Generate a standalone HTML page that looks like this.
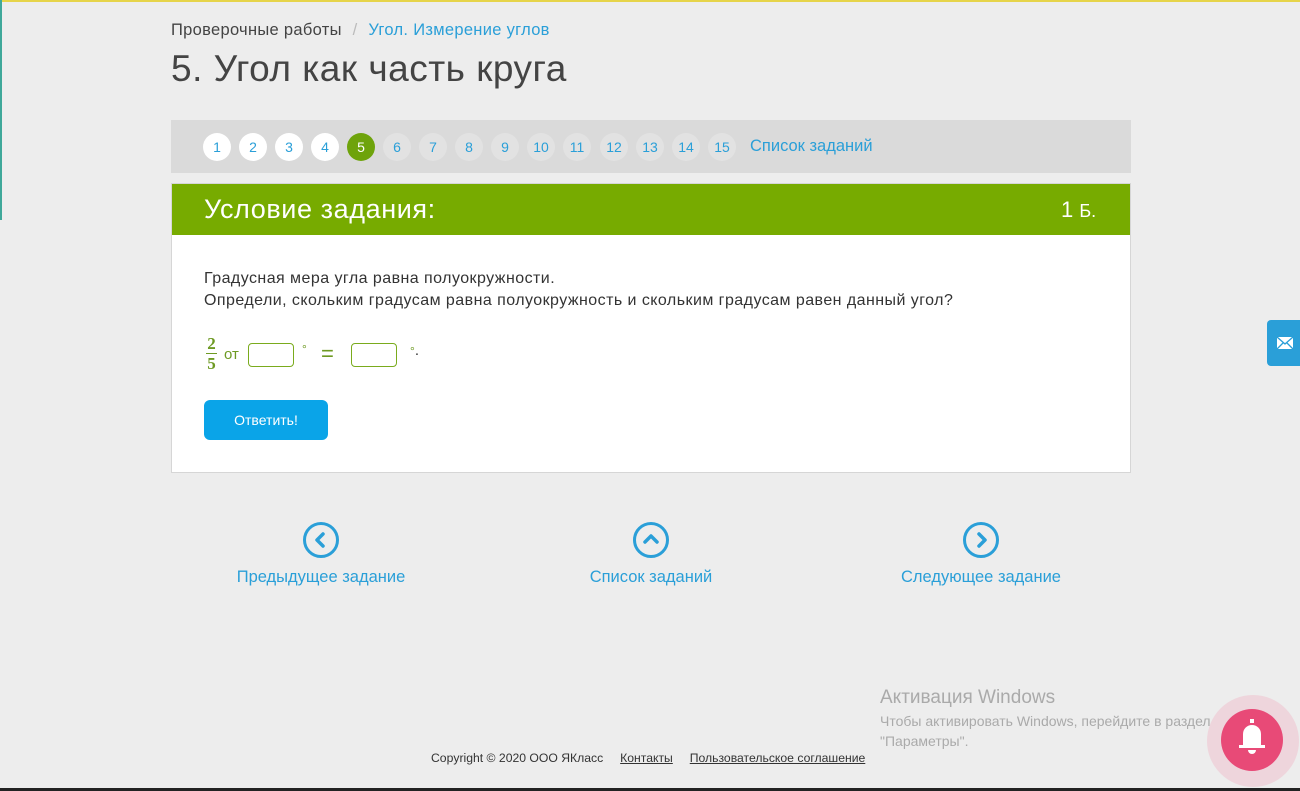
<!DOCTYPE html>
<html><head><meta charset="utf-8"><style>
body{margin:0;width:1300px;height:791px;background:#ededed;font-family:"Liberation Sans","Noto Sans CJK SC",sans-serif;position:relative;overflow:hidden}
.a{position:absolute}
.c{position:absolute;top:133px;width:28px;height:28px;border-radius:50%;background:#fff;color:#2a9fd8;font-size:14px;text-align:center;line-height:28px}
.g{background:#e2e2e2}
.blue{color:#2a9fd8}
.inp{display:inline-block;width:44px;height:22px;border:1px solid #7aab1d;border-radius:4px;vertical-align:middle;background:#fff}
.nav{position:absolute;top:522px;text-align:center;color:#2a9fd8;font-size:16.5px;width:240px}
.nav .ci{width:36px;height:36px;border:3px solid #2a9fd8;border-radius:50%;margin:0 auto 10px;box-sizing:border-box;padding:1px}
</style></head><body>
<div class="a" style="left:0;top:0;width:1300px;height:2px;background:#e6d44a"></div>
<div class="a" style="left:0;top:0;width:2px;height:220px;background:#3fa89a"></div>
<div class="a" style="left:171px;top:21px;font-size:16.5px;letter-spacing:0.3px;color:#444">Проверочные работы <span style="color:#bbb;margin:0 6px">/</span> <span class="blue">Угол. Измерение углов</span></div>
<div class="a" style="left:171px;top:48px;font-size:37px;letter-spacing:0.5px;color:#444">5. Угол как часть круга</div>
<div class="a" style="left:171px;top:120px;width:960px;height:53px;background:#dadada"></div>
<div class="c" style="left:203px">1</div><div class="c" style="left:239px">2</div><div class="c" style="left:275px">3</div><div class="c" style="left:311px">4</div>
<div class="c" style="left:347px;background:#6ea30b;color:#fff">5</div>
<div class="c g" style="left:383px">6</div><div class="c g" style="left:419px">7</div><div class="c g" style="left:455px">8</div><div class="c g" style="left:491px">9</div><div class="c g" style="left:527px">10</div><div class="c g" style="left:563px">11</div><div class="c g" style="left:600px">12</div><div class="c g" style="left:636px">13</div><div class="c g" style="left:672px">14</div><div class="c g" style="left:708px">15</div>
<div class="a blue" style="left:750px;top:137px;font-size:16.5px">Список заданий</div>
<div class="a" style="left:171px;top:183px;width:958px;height:288px;background:#fff;border:1px solid #d6d6d6"></div>
<div class="a" style="left:172px;top:184px;width:958px;height:51px;background:#77ab00"></div>
<div class="a" style="left:204px;top:194px;font-size:27px;letter-spacing:0.6px;color:#fff">Условие задания:</div>
<div class="a" style="left:1061px;top:197px;font-size:22px;color:#fff">1 <span style="font-size:18px">Б.</span></div>
<div class="a" style="left:204px;top:268px;font-size:16px;letter-spacing:0.45px;color:#333;line-height:22px">Градусная мера угла равна полуокружности.<br>Определи, скольким градусам равна полуокружность и скольким градусам равен данный угол?</div>
<div class="a" style="left:206px;top:334px;font-family:'Liberation Serif',serif;font-weight:bold;color:#6e9a23;font-size:17px;text-align:center;line-height:19px">2<div style="border-top:1px solid #6e9a23;width:11px"></div>5</div>
<div class="a" style="left:224px;top:346px;font-size:15px;color:#6e9a23">от</div>
<div class="a inp" style="left:248px;top:343px"></div>
<div class="a" style="left:302px;top:342px;color:#6e9a23;font-size:12px">°</div>
<div class="a" style="left:321px;top:341px;color:#6e9a23;font-size:22px">=</div>
<div class="a inp" style="left:351px;top:343px"></div>
<div class="a" style="left:410px;top:342px;color:#6e9a23;font-size:12px">°<span style="color:#333;font-size:15px">.</span></div>
<div class="a" style="left:204px;top:400px;width:124px;height:40px;border-radius:6px;background:#0aa4e8;color:#fff;font-size:14px;text-align:center;line-height:40px">Ответить!</div>
<div class="nav" style="left:201px"><div class="ci"><svg width="28" height="28" viewBox="0 0 28 28"><path d="M16 8l-6 6 6 6" stroke="#2a9fd8" stroke-width="3.5" fill="none" stroke-linecap="round" stroke-linejoin="round"/></svg></div>Предыдущее задание</div>
<div class="nav" style="left:531px"><div class="ci"><svg width="28" height="28" viewBox="0 0 28 28"><path d="M8 16l6-6 6 6" stroke="#2a9fd8" stroke-width="3.5" fill="none" stroke-linecap="round" stroke-linejoin="round"/></svg></div>Список заданий</div>
<div class="nav" style="left:861px"><div class="ci"><svg width="28" height="28" viewBox="0 0 28 28"><path d="M12 8l6 6-6 6" stroke="#2a9fd8" stroke-width="3.5" fill="none" stroke-linecap="round" stroke-linejoin="round"/></svg></div>Следующее задание</div>
<div class="a" style="left:880px;top:687px;font-size:19px;color:#aaa">Активация Windows</div>
<div class="a" style="left:880px;top:711px;font-size:14px;color:#aaa;line-height:20px;white-space:nowrap">Чтобы активировать Windows, перейдите в раздел<br>"Параметры".</div>
<div class="a" style="left:431px;top:751px;font-size:12.2px;color:#333">Copyright © 2020 ООО ЯКласс &nbsp; &nbsp; <u>Контакты</u> &nbsp; &nbsp; <u>Пользовательское соглашение</u></div>
<div class="a" style="left:1267px;top:320px;width:40px;height:46px;background:#2a9fd8;border-radius:4px"><svg class="a" style="left:9px;top:16px" width="18" height="14"><rect x="1" y="1" width="16" height="12" fill="#fff"/><path d="M1 1l8 7 8-7M1 13l6-6M17 13l-6-6" stroke="#2a9fd8" stroke-width="1.3" fill="none"/></svg></div>
<div class="a" style="left:1207px;top:695px;width:92px;height:92px;border-radius:50%;background:rgba(240,170,190,.35)"></div>
<div class="a" style="left:1221px;top:709px;width:62px;height:62px;border-radius:50%;background:#e84a77"><svg class="a" style="left:15px;top:10px" width="32" height="40"><rect x="14" y="0" width="4" height="4" fill="#fff"/><path d="M7 26V15a9 9 0 0 1 18 0v11z" fill="#fff"/><rect x="3" y="26" width="26" height="3" fill="#fff"/><path d="M12 31h8a4 4 0 0 1-8 0z" fill="#fff"/></svg></div>
<div class="a" style="left:0;top:788px;width:1300px;height:3px;background:#222"></div>
</body></html>
